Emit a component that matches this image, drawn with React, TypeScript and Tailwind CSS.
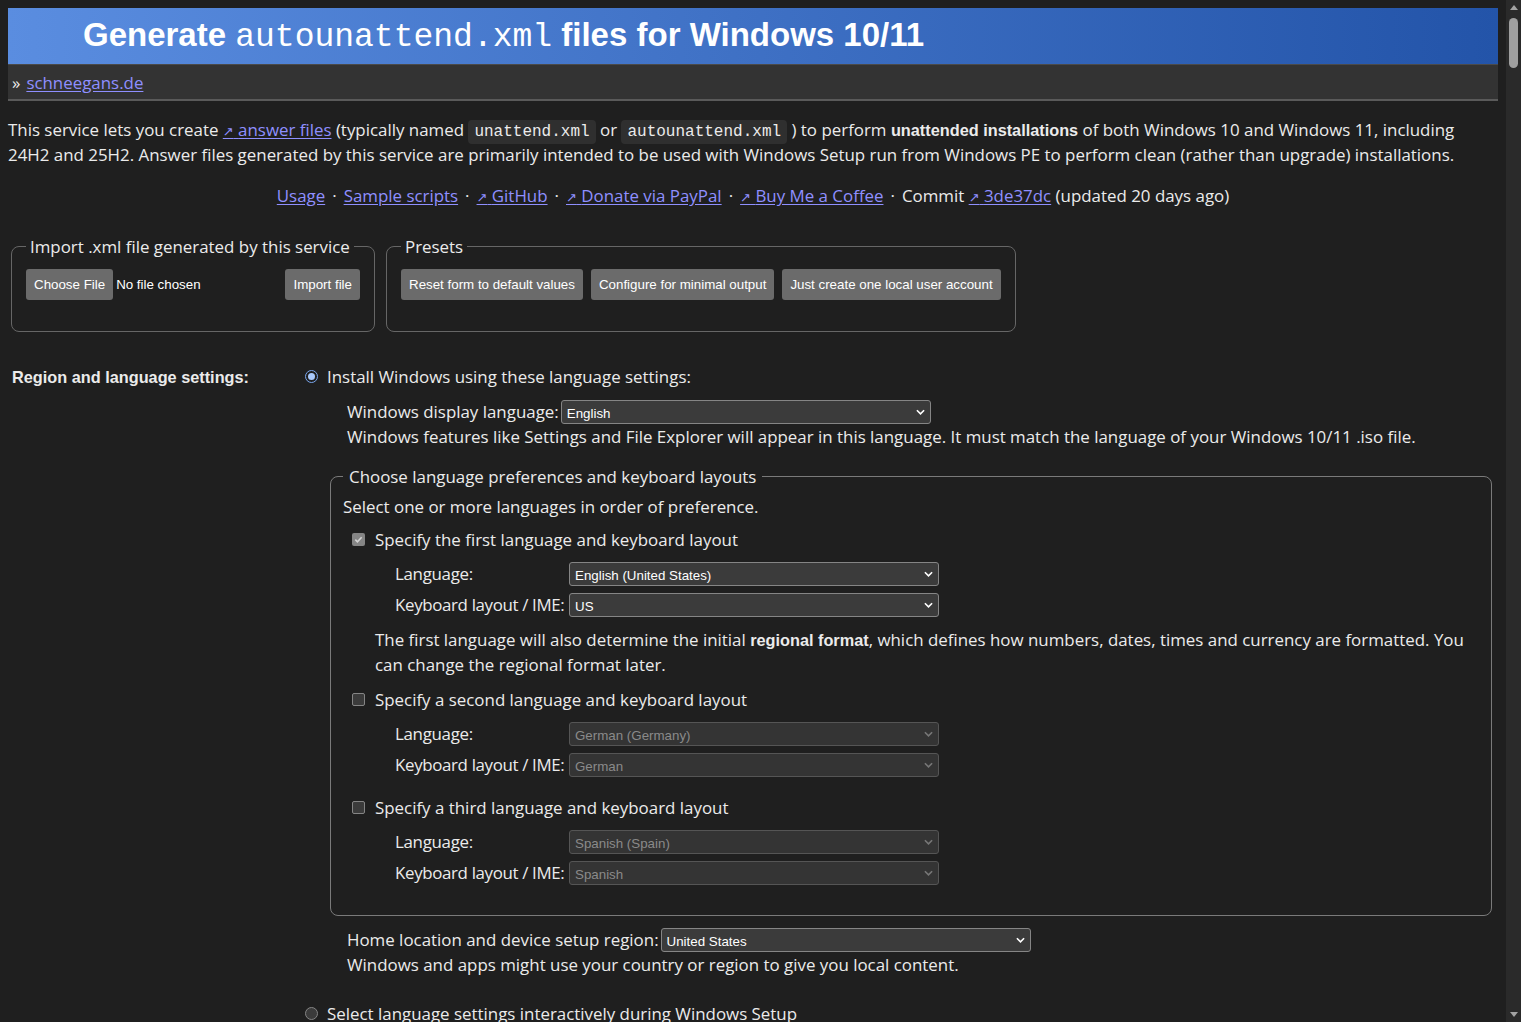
import React from 'react';

const Arrow = () => <span className="font-['DejaVu_Sans'] text-[13px] leading-none">↗</span>;

const Link = ({ children, ext }: { children: React.ReactNode; ext?: boolean }) => (
  <a href="#" className="text-[#8f8fff] underline underline-offset-2">
    {ext && <Arrow />}
    {ext && ' '}
    {children}
  </a>
);

const Dot = () => <span className="mx-[7px]">·</span>;

const Code = ({ children }: { children: React.ReactNode }) => (
  <code className="rounded-[4px] bg-[#2f2f2f] px-1.5 py-[3px] font-['Liberation_Mono',monospace] text-[16px] leading-none">
    {children}
  </code>
);

const Bold = ({ children }: { children: React.ReactNode }) => (
  <b className="font-['Liberation_Sans',Arial,sans-serif] text-[16.3px] leading-none font-bold">{children}</b>
);

const Chevron = ({ dim }: { dim?: boolean }) => (
  <svg
    viewBox="0 0 10 6"
    className={dim ? 'h-[6px] w-[9px] text-[#777]' : 'h-[6px] w-[9px] text-white'}
    fill="none"
    stroke="currentColor"
    strokeWidth="1.8"
  >
    <path d="M1 1l4 4 4-4" />
  </svg>
);

const Select = ({ value, disabled }: { value: string; disabled?: boolean }) => (
  <div className="relative w-[370px]">
    <select
      disabled={disabled}
      className={
        disabled
          ? "block h-6 w-full appearance-none rounded-[3px] border border-[#555] bg-[#343434] pl-[5px] font-['Liberation_Sans',Arial,sans-serif] text-[13.33px] text-[#8a8a8a]"
          : "block h-6 w-full appearance-none rounded-[3px] border border-[#858585] bg-[#3b3b3b] pl-[5px] font-['Liberation_Sans',Arial,sans-serif] text-[13.33px] text-white"
      }
    >
      <option>{value}</option>
    </select>
    <span className="pointer-events-none absolute right-[6px] top-[9px] flex">
      <Chevron dim={disabled} />
    </span>
  </div>
);

const Checkbox = ({ checked }: { checked?: boolean }) =>
  checked ? (
    <span className="flex h-[13px] w-[13px] items-center justify-center rounded-[2px] bg-[#858585]">
      <svg viewBox="0 0 10 10" className="h-[9px] w-[9px]" fill="none" stroke="#d4d4d4" strokeWidth="1.8">
        <path d="M1.5 5.2l2.3 2.3L8.5 2.5" />
      </svg>
    </span>
  ) : (
    <span className="h-[13px] w-[13px] rounded-[2px] border border-[#858585] bg-[#3b3b3b]" />
  );

const Radio = ({ checked }: { checked?: boolean }) =>
  checked ? (
    <span className="flex h-[13px] w-[13px] items-center justify-center rounded-full border border-[#7aa7ee] bg-[#1f1f1f]">
      <span className="h-[7px] w-[7px] rounded-full bg-[#a9c9fb]" />
    </span>
  ) : (
    <span className="h-[13px] w-[13px] rounded-full border border-[#858585] bg-[#3b3b3b]" />
  );

const Button = ({ children }: { children: React.ReactNode }) => (
  <button className="h-[31px] rounded-[3px] bg-[#6b6b6b] px-2 font-['Liberation_Sans',Arial,sans-serif] text-[13.33px] text-white">
    {children}
  </button>
);

interface LangProps {
  title: string;
  checked?: boolean;
  lang: string;
  kb: string;
  disabled?: boolean;
  className: string;
  children?: React.ReactNode;
}

const LangBlock = ({ title, checked, lang, kb, disabled, className, children }: LangProps) => (
  <div className={className}>
    <label className="flex h-[25px] items-center gap-[10px] pl-[9px]">
      <Checkbox checked={checked} />
      {title}
    </label>
    <div className="mt-[9px] ml-[52px] grid grid-cols-[174px_370px] items-center gap-y-[6px] whitespace-nowrap">
      <span className="tracking-[-0.3px]">Language:</span>
      <Select value={lang} disabled={disabled} />
      <span className="tracking-[-0.35px]">Keyboard layout / IME:</span>
      <Select value={kb} disabled={disabled} />
    </div>
    {children}
  </div>
);

export default function App() {
  return (
    <div className="flex h-screen overflow-hidden bg-[#1f1f1f] font-['Open_Sans',sans-serif] text-[16.9px] leading-[25px] text-[#ebebeb]">
      <main className="min-w-0 flex-1 px-2">
        <header className="mt-2 flex h-[57px] items-center border-b border-[#4a4a4a] bg-linear-to-r from-[#5a8de0] to-[#2354a9] pl-[75px]">
          <h1 className="font-['Liberation_Sans',Arial,sans-serif] text-[33px] font-bold text-white">
            Generate <span className="font-['Liberation_Mono',monospace] font-normal">autounattend.xml</span> files for Windows 10/11
          </h1>
        </header>
        <nav className="flex h-[36px] items-center border-b-2 border-[#5a5a5a] bg-[#333333] pl-1">
          <span className="mr-1.5">»</span>
          <Link>schneegans.de</Link>
        </nav>

        <p className="mt-4">
          This service lets you create <Link ext>answer files</Link> (typically named <Code>unattend.xml</Code> or{' '}
          <Code>autounattend.xml</Code> ) to perform <Bold>unattended installations</Bold> of both Windows 10 and Windows 11,
          including 24H2 and 25H2. Answer files generated by this service are primarily intended to be used with Windows Setup
          run from Windows PE to perform clean (rather than upgrade) installations.
        </p>

        <p className="mt-4 text-center">
          <Link>Usage</Link>
          <Dot />
          <Link>Sample scripts</Link>
          <Dot />
          <Link ext>GitHub</Link>
          <Dot />
          <Link ext>Donate via PayPal</Link>
          <Dot />
          <Link ext>Buy Me a Coffee</Link>
          <Dot />
          Commit <Link ext>3de37dc</Link> (updated 20 days ago)
        </p>

        <div className="mt-[26px] ml-[3px] flex items-start gap-[11px]">
          <fieldset className="w-[364px] rounded-lg border border-[#666] px-[14px] pt-[10px] pb-[31px]">
            <legend className="px-1">Import .xml file generated by this service</legend>
            <div className="flex items-center justify-between">
              <div className="flex items-center gap-[3px]">
                <Button>Choose File</Button>
                <span className="font-['Liberation_Sans',Arial,sans-serif] text-[13.33px] text-white">No file chosen</span>
              </div>
              <Button>Import file</Button>
            </div>
          </fieldset>
          <fieldset className="rounded-lg border border-[#666] px-[14px] pt-[10px] pb-[31px]">
            <legend className="px-1">Presets</legend>
            <div className="flex items-center gap-2">
              <Button>Reset form to default values</Button>
              <Button>Configure for minimal output</Button>
              <Button>Just create one local user account</Button>
            </div>
          </fieldset>
        </div>

        <section className="mt-[32px] grid grid-cols-[297px_1fr]">
          <h2 className="pl-1">
            <Bold>Region and language settings:</Bold>
          </h2>
          <div>
            <label className="flex h-[25px] items-center gap-[9px]">
              <Radio checked />
              Install Windows using these language settings:
            </label>
            <div className="pl-[42px]">
              <div className="mt-[10px] flex items-center gap-[2px]">
                <span>Windows display language:</span>
                <Select value="English" />
              </div>
              <p>
                Windows features like Settings and File Explorer will appear in this language. It must match the language of
                your Windows 10/11 .iso file.
              </p>
            </div>

            <fieldset className="mt-[15px] mr-[6px] ml-[25px] rounded-lg border border-[#7a7a7a] px-3 pt-[5px] pb-[30px]">
              <legend className="px-1.5">Choose language preferences and keyboard layouts</legend>
              <p>Select one or more languages in order of preference.</p>
              <LangBlock
                className="mt-[8px]"
                title="Specify the first language and keyboard layout"
                checked
                lang="English (United States)"
                kb="US"
              >
                <p className="mt-[10px] pl-[32px]">
                  The first language will also determine the initial <Bold>regional format</Bold>, which defines how
                  numbers, dates, times and currency are formatted. You can change the regional format later.
                </p>
              </LangBlock>
              <LangBlock
                className="mt-[10px]"
                title="Specify a second language and keyboard layout"
                lang="German (Germany)"
                kb="German"
                disabled
              />
              <LangBlock
                className="mt-[18px]"
                title="Specify a third language and keyboard layout"
                lang="Spanish (Spain)"
                kb="Spanish"
                disabled
              />
            </fieldset>

            <div className="pl-[42px]">
              <div className="mt-[11px] flex items-center gap-[2px]">
                <span>Home location and device setup region:</span>
                <Select value="United States" />
              </div>
              <p>Windows and apps might use your country or region to give you local content.</p>
            </div>

            <label className="mt-[24px] flex h-[25px] items-center gap-[9px]">
              <Radio />
              Select language settings interactively during Windows Setup
            </label>
          </div>
        </section>
      </main>

      <aside className="flex w-[15px] shrink-0 flex-col items-center bg-[#2a2a2a]">
        <svg viewBox="0 0 8 5" className="mt-[5px] h-[5px] w-[8px]" fill="#a3a3a3">
          <path d="M4 0l4 5H0z" />
        </svg>
        <div className="mt-[8px] h-[50px] w-[9px] rounded-full bg-[#9f9f9f]" />
        <div className="flex-1" />
        <svg viewBox="0 0 8 5" className="mb-[5px] h-[5px] w-[8px]" fill="#a3a3a3">
          <path d="M0 0h8L4 5z" />
        </svg>
      </aside>
    </div>
  );
}
